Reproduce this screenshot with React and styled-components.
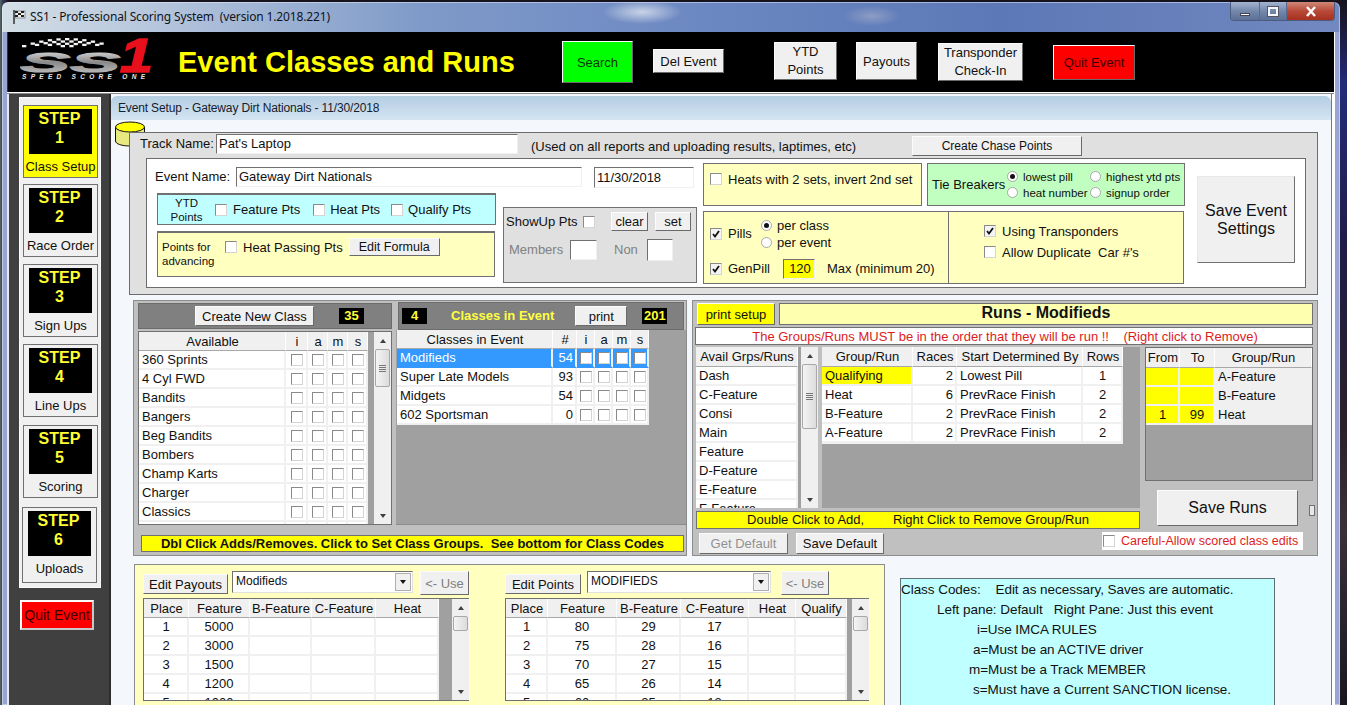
import React from 'react';
import styled, { createGlobalStyle } from 'styled-components';

const GlobalStyle = createGlobalStyle`
  html, body {
    margin: 0;
    padding: 0;
    width: 1347px;
    height: 705px;
    overflow: hidden;
    background: #1a1620;
  }
  * { box-sizing: border-box; }
  #root {
    font-family: "Liberation Sans", Arial, sans-serif;
    font-size: 13px;
    color: #111;
  }
`;

const Desktop = styled.div`
  width: 1347px;
  height: 705px;
  overflow: hidden;
  padding: 2px 0 0 2px;
  background:
    linear-gradient(90deg, #5a6a5c 0, #39426a 2px, #2a2430 6px, transparent 8px),
    linear-gradient(180deg, #17131c 0, #232c78 12%, #201c48 35%, #2b2028 60%, #3a3038 75%, #1a1620 100%);
`;
const Window = styled.div`
  width: 1338px;
  height: 703px;
  padding: 0 5px;
  border-radius: 6px 6px 0 0;
  background:
    linear-gradient(180deg, transparent 0, transparent 30px, #98a4d4 30px, #98a4d4 100%),
    radial-gradient(ellipse 40px 12px at 640px 10px, #c9d3e6 0, transparent 100%),
    radial-gradient(ellipse 28px 10px at 870px 14px, #8d9dc4 0, transparent 100%),
    linear-gradient(90deg, #d4dfe6 0, #b0c1da 180px, #7f9ac8 420px, #6c88c2 700px, #5c78b6 1000px, #7288c0 1338px);
  box-shadow: inset 0 0 0 1px rgba(230, 240, 255, 0.5);
`;
const TitleBar = styled.div`
  height: 30px;
  display: flex;
  align-items: flex-start;
  padding-left: 5px;
`;
const TitleText = styled.div`
  font-family: "Noto Sans", "Liberation Sans", sans-serif;
  font-size: 12px;
  line-height: 30px;
  margin-left: 4px;
  letter-spacing: -0.15px;
  white-space: pre;
  color: #10141c;
`;
const FlagIcon = styled.svg`
  margin-top: 7px;
`;
const WinButtons = styled.div`
  margin-left: auto;
  display: flex;
  height: 19px;
  border: 1px solid #4c5c80;
  border-top: none;
  border-radius: 0 0 4px 4px;
  overflow: hidden;
`;
const WinButton = styled.div`
  width: ${p => p.$w}px;
  display: flex;
  align-items: center;
  justify-content: center;
  background: ${p => p.$close
    ? 'linear-gradient(180deg, #d08878, #b84a38 50%, #a83020)'
    : 'linear-gradient(180deg, #a4b4d0, #7488ac 50%, #5c7098)'};
  border-left: ${p => p.$first ? 'none' : '1px solid #5a6a90'};
`;
const MinGlyph = styled.div`
  width: 10px;
  height: 3px;
  margin-top: 6px;
  background: #fff;
  border: 1px solid #445;
`;
const MaxGlyph = styled.div`
  width: 10px;
  height: 9px;
  background: transparent;
  border: 2px solid #f4f6fa;
  outline: 1px solid #556;
`;

const Client = styled.div`
  width: 1328px;
  height: 673px;
  overflow: hidden;
  background: #404040;
  border-right: 1px solid #fff;
`;
const Header = styled.div`
  height: 60px;
  background: #000;
  display: flex;
  align-items: center;
  border-left: 1px solid #333;
`;
const HeaderLine = styled.div`
  height: 2px;
  background: linear-gradient(180deg, #fff 50%, #888 50%);
`;
const LogoBox = styled.div`
  width: 160px;
  height: 60px;
  padding: 4px 0 0 12px;
  flex-shrink: 0;
`;
const PageTitle = styled.div`
  width: 384px;
  padding-left: 10px;
  font-size: 29px;
  font-weight: 700;
  color: #ffff00;
  white-space: nowrap;
`;
const Bevel = styled.div`
  display: flex;
  align-items: center;
  justify-content: center;
  text-align: center;
  flex-shrink: 0;
  width: ${p => p.$w}px;
  height: ${p => p.$h}px;
  margin-left: ${p => p.$ml || 0}px;
  margin-top: ${p => p.$mt || 0}px;
  background: ${p => p.$bg || '#f0f0f0'};
  color: ${p => p.$color || '#111'};
  font-size: ${p => p.$size || 13}px;
  line-height: ${p => p.$lh || 'normal'};
  border: 1px solid;
  border-color: #fcfcfc #6a6a6a #6a6a6a #fcfcfc;
  white-space: pre-line;
`;

const Body = styled.div`
  display: flex;
  height: 611px;
  background: #fff;
`;
const Sidebar = styled.div`
  width: 102px;
  flex-shrink: 0;
  padding: 3px 0 0 10px;
  background: #404040;
  border-left: 2px solid #e8e8e8;
`;
const StepPanel = styled.div`
  width: 82px;
  height: 491px;
  padding: 7px 0 0 3px;
  background: #f0f0f0;
  border: 1px solid #fafafa;
`;
const StepCard = styled.div`
  width: 75px;
  height: ${p => p.$h}px;
  margin-top: ${p => p.$mt}px;
  margin-left: ${p => p.$ml || 0}px;
  padding: 3px 0 0 5px;
  background: ${p => p.$active ? '#ffff00' : '#f0f0f0'};
  border: 1px solid #707070;
`;
const StepBlack = styled.div`
  width: 63px;
  height: 45px;
  background: #000;
  color: #ffff33;
  font-size: 16px;
  font-weight: 700;
  line-height: 19px;
  text-align: center;
  padding-right: 2px;
`;
const StepLabel = styled.div`
  font-size: 13px;
  line-height: 16px;
  margin: 5px 0 0 -5px;
  width: 73px;
  text-align: center;
  white-space: nowrap;
`;
const SideQuit = styled(Bevel)`
  font-size: 14px;
  color: #3a0000;
  border-color: #fcfcfc #c8c8c8 #c8c8c8 #fcfcfc;
  border-width: 2px;
`;

const Main = styled.div`
  position: relative;
  width: 1223px;
  background: #f4f8fc;
  border-left: 2px solid #2c2c2c;
  border-right: 1px solid #4a8a90;
`;
const TabHead = styled.div`
  height: 24px;
  margin-top: 2px;
  padding-left: 7px;
  font-size: 12px;
  letter-spacing: -0.15px;
  line-height: 24px;
  border-radius: 6px 6px 0 0;
  background: linear-gradient(180deg, #b4cee2, #d4e4f2);
  color: #15202c;
`;
const Cylinder = styled.svg`
  position: absolute;
  left: 3px;
  top: 27px;
`;
const TrackPanel = styled.div`
  position: relative;
  width: 1189px;
  height: 163px;
  margin: 12px 0 0 18px;
  background: #e0e0e0;
  border: 1px solid #6c6c6c;
`;
const TrackRow = styled.div`
  height: 25px;
  display: flex;
  align-items: flex-start;
  padding: 1px 0 0 10px;
`;
const Text = styled.div`
  width: ${p => p.$w ? `${p.$w}px` : 'auto'};
  margin-left: ${p => p.$ml || 0}px;
  margin-top: ${p => p.$mt || 0}px;
  font-size: ${p => p.$size || 13}px;
  font-weight: ${p => p.$bold ? 700 : 400};
  color: ${p => p.$color || 'inherit'};
  line-height: ${p => p.$lh || 20}px;
  text-align: ${p => p.$align || 'left'};
  white-space: pre-line;
  flex-shrink: 0;
`;
const Input = styled.div`
  width: ${p => p.$w}px;
  height: ${p => p.$h}px;
  margin-left: ${p => p.$ml || 0}px;
  padding-left: 2px;
  line-height: ${p => p.$h - 2}px;
  font-size: 13px;
  background: ${p => p.$bg || '#fff'};
  text-align: ${p => p.$align || 'left'};
  border: 1px solid;
  border-color: #707070 #f0f0f0 #f0f0f0 #707070;
  flex-shrink: 0;
`;
const WhitePanel = styled.div`
  display: flex;
  width: 1160px;
  height: 130px;
  margin-left: 16px;
  background: #fff;
  border: 1px solid #6c6c6c;
`;
const ColA = styled.div`
  width: 540px;
  margin-left: 10px;
`;
const ColB = styled.div`
  width: 482px;
  margin-left: 6px;
`;
const Row = styled.div`
  display: flex;
  align-items: ${p => p.$align || 'center'};
  height: ${p => p.$h ? `${p.$h}px` : 'auto'};
  margin-top: ${p => p.$mt || 0}px;
  margin-left: ${p => p.$ml || 0}px;
`;
const Tinted = styled.div`
  display: ${p => p.$flex ? 'flex' : 'block'};
  align-items: ${p => p.$align || 'center'};
  width: ${p => p.$w}px;
  height: ${p => p.$h}px;
  margin-top: ${p => p.$mt || 0}px;
  margin-left: ${p => p.$ml || 0}px;
  padding: ${p => p.$pad || 0};
  background: ${p => p.$bg};
  border: 1px solid #707070;
  border-top-width: ${p => p.$heavy ? 2 : 1}px;
  flex-shrink: 0;
`;
const Stack = styled.div`
  flex-shrink: 0;
`;
const Box = styled.span`
  display: inline-flex;
  align-items: center;
  justify-content: center;
  width: 12px;
  height: 12px;
  flex-shrink: 0;
  background: ${p => p.$bg || '#fff'};
  border: 1px solid;
  border-color: #8a8a8a #d4d4d4 #d4d4d4 #8a8a8a;
`;
const Radio = styled.span`
  display: inline-flex;
  align-items: center;
  justify-content: center;
  width: 11px;
  height: 11px;
  flex-shrink: 0;
  border-radius: 50%;
  background: #fff;
  border: 1px solid #a8a8a8;
  &::after {
    content: '';
    display: ${p => p.$on ? 'block' : 'none'};
    width: 5px;
    height: 5px;
    border-radius: 50%;
    background: #111;
  }
`;
const Opt = styled.div`
  display: flex;
  align-items: center;
  gap: ${p => p.$gap || 6}px;
  width: ${p => p.$w ? `${p.$w}px` : 'auto'};
  margin-left: ${p => p.$ml || 0}px;
  margin-top: ${p => p.$mt || 0}px;
  height: ${p => p.$h || 16}px;
  font-size: ${p => p.$size || 13}px;
  white-space: pre;
  flex-shrink: 0;
`;
const SaveEvent = styled(Bevel)`
  border-color: #e8e8e8 #707070 #707070 #e8e8e8;
`;

const MidRow = styled.div`
  display: flex;
  margin: 5px 0 0 22px;
`;
const ClassesPanel = styled.div`
  width: 554px;
  height: 256px;
  padding-top: 1px;
  background: #c0c0c0;
  border: 1px solid #8c8c8c;
`;
const ClassColumns = styled.div`
  display: flex;
  height: 223px;
`;
const LeftCol = styled.div`
  width: 254px;
  margin: 1px 0 0 4px;
`;
const RightCol = styled.div`
  width: 291px;
  margin-left: 4px;
  background: linear-gradient(180deg, #c0c0c0 28px, #a0a0a0 28px);
  border-bottom: 1px solid #8c8c8c;
`;
const GrayHead = styled.div`
  display: flex;
  align-items: center;
  height: ${p => p.$h}px;
  margin-left: ${p => p.$ml || 0}px;
  width: ${p => p.$w}px;
  background: #808080;
  border: 1px solid #6c6c6c;
`;
const Badge = styled.div`
  width: 25px;
  height: 16px;
  margin-left: ${p => p.$ml}px;
  background: #000;
  color: #ffff33;
  font-size: 13px;
  font-weight: 700;
  line-height: 16px;
  text-align: center;
  flex-shrink: 0;
`;
const GridWrap = styled.div`
  display: flex;
  width: ${p => p.$w}px;
  height: ${p => p.$h}px;
  margin-top: ${p => p.$mt || 0}px;
  background: #a0a0a0;
  border: ${p => p.$flat ? 'none' : '1px solid #707070'};
  flex-shrink: 0;
`;
const GridBody = styled.div`
  width: ${p => p.$w}px;
  height: ${p => p.$h ? `${p.$h}px` : '100%'};
  margin-left: ${p => p.$ml || 0}px;
  overflow: hidden;
  flex-shrink: 0;
  background: #f0f0f0;
`;
const GridRow = styled.div`
  display: grid;
  grid-template-columns: ${p => p.$cols};
  height: ${p => p.$h || 19}px;
  background: ${p => p.$selected ? '#3399ff' : 'transparent'};
  color: ${p => p.$selected ? '#fff' : 'inherit'};
`;
const Cell = styled.div`
  display: flex;
  align-items: center;
  justify-content: ${p => p.$align === 'center' ? 'center' : p.$align === 'right' ? 'flex-end' : 'flex-start'};
  padding: 0 2px 0 3px;
  height: ${p => p.$h || 19}px;
  font-size: 13px;
  white-space: nowrap;
  overflow: hidden;
  background: ${p => p.$head ? '#f0f0f0' : p.$bg || (p.$selected ? '#3399ff' : '#fff')};
  border-right: 2px solid #f0f0f0;
  border-bottom: 2px solid ${p => p.$selected ? '#3399ff' : '#f0f0f0'};
  ${p => p.$head && 'border-bottom: 1px solid #a8a8a8; border-right: 1px solid #fff;'}
`;
const ScrollTrack = styled.div`
  display: flex;
  flex-direction: column;
  width: 17px;
  margin-left: ${p => p.$ml || 0}px;
  background: #f0f0f0;
  flex-shrink: 0;
`;
const Arrow = styled.div`
  height: 17px;
  display: flex;
  align-items: center;
  justify-content: center;
  flex-shrink: 0;
  &::after {
    content: '';
    border-left: 3px solid transparent;
    border-right: 3px solid transparent;
    border-${p => p.$down ? 'top' : 'bottom'}: 4px solid #404040;
  }
`;
const Thumb = styled.div`
  height: ${p => p.$h}px;
  margin: 0 1px;
  border: 1px solid #a8a8a8;
  border-radius: 2px;
  background: linear-gradient(90deg, #f4f4f4, #dcdcdc);
  display: flex;
  align-items: center;
  justify-content: center;
  flex-shrink: 0;
`;
const Grip = styled.div`
  width: 7px;
  height: 7px;
  background: repeating-linear-gradient(180deg, #777 0 1px, transparent 1px 2px);
`;
const Spacer = styled.div`
  flex: 1;
`;
const BarYellow = styled.div`
  width: ${p => p.$w}px;
  height: ${p => p.$h}px;
  margin: ${p => p.$margin};
  background: #ffff00;
  border: 1px solid #707070;
  font-size: ${p => p.$size}px;
  font-weight: ${p => p.$bold ? 700 : 400};
  line-height: ${p => p.$h - 2}px;
  white-space: pre;
  text-align: center;
`;
const GreyFill = styled.div`
  width: ${p => p.$w}px;
  flex-shrink: 0;
  background: ${p => p.$bg};
`;

const RunsPanel = styled.div`
  width: 626px;
  height: 256px;
  margin-left: 5px;
  padding: 2px 0 0 2px;
  background: #c0c0c0;
  border: 1px solid #8c8c8c;
`;
const RunsTitle = styled.div`
  width: 534px;
  height: 22px;
  margin-left: 4px;
  background: #ffffb0;
  border: 1px solid #707070;
  font-size: 16px;
  font-weight: 700;
  line-height: 18px;
  text-align: center;
`;
const RedLine = styled.div`
  width: 618px;
  height: 18px;
  margin-top: 2px;
  background: #fff;
  border: 1px solid #707070;
  color: #dd1c1c;
  font-size: 13px;
  line-height: 17px;
  text-align: center;
  padding-left: 2px;
  white-space: pre;
`;
const RunsBody = styled.div`
  display: flex;
  margin: 2px 0 0 1px;
  height: 182px;
`;
const RunsLeft = styled.div`
  width: 444px;
  flex-shrink: 0;
`;
const RunsRight = styled.div`
  width: 168px;
  margin-left: 5px;
  flex-shrink: 0;
`;
const RunsFoot = styled.div`
  display: flex;
  align-items: flex-start;
  margin: 3px 0 0 4px;
`;
const Careful = styled.div`
  display: flex;
  align-items: center;
  gap: 6px;
  width: 201px;
  height: 18px;
  margin-left: 218px;
  padding-left: 1px;
  background: #fff;
  color: #dd1c1c;
  font-size: 12.5px;
  white-space: nowrap;
`;
const TinyTab = styled.div`
  width: 6px;
  height: 11px;
  margin: 24px 0 0 11px;
  background: #e8e8e8;
  border: 1px solid #707070;
  flex-shrink: 0;
`;

const BottomRow = styled.div`
  display: flex;
  margin: 8px 0 0 23px;
`;
const YellowPanel = styled.div`
  display: flex;
  width: 751px;
  height: 160px;
  padding: 6px 0 0 8px;
  background: #ffffc0;
  border: 1px solid #8c8c8c;
  flex-shrink: 0;
`;
const PayBlock = styled.div`
  width: ${p => p.$w}px;
  margin-left: ${p => p.$ml || 0}px;
  flex-shrink: 0;
`;
const PayTop = styled.div`
  display: flex;
  align-items: flex-start;
  height: 27px;
`;
const Select = styled.div`
  display: flex;
  justify-content: space-between;
  width: ${p => p.$w}px;
  height: 22px;
  margin-left: ${p => p.$ml}px;
  padding: 1px 1px 1px 3px;
  background: #fff;
  font-size: 12px;
  line-height: 17px;
  border: 1px solid;
  border-color: #707070 #e0e0e0 #e0e0e0 #707070;
  flex-shrink: 0;
`;
const SelectArrow = styled.div`
  width: 16px;
  height: 18px;
  background: #f0f0f0;
  border: 1px solid #b0b0b0;
  display: flex;
  align-items: center;
  justify-content: center;
  &::after {
    content: '';
    border-left: 3px solid transparent;
    border-right: 3px solid transparent;
    border-top: 4px solid #111;
  }
`;
const CodesBox = styled.div`
  width: 375px;
  height: 146px;
  margin: 14px 0 0 15px;
  padding-top: 1px;
  background: #c0ffff;
  border: 1px solid #607070;
  flex-shrink: 0;
`;
const CodeLine = styled.div`
  height: 20px;
  padding-left: ${p => p.$indent}px;
  font-size: 13.5px;
  letter-spacing: -0.05px;
  line-height: 20px;
  white-space: pre;
`;

const CheckMark = () => (
  <svg width="8" height="8" viewBox="0 0 8 8">
    <path d="M1 4 L3 6.5 L7 1" fill="none" stroke="#111" strokeWidth="1.8" />
  </svg>
);

const Check = ({ on, bg }) => (
  <Box $bg={bg}>{on && <CheckMark />}</Box>
);

// checkered flag squares over the logo, highest in the middle
const flagSquares = [];
for (let i = 0; i < 20; i++) {
  const rows = 1 + Math.round((1 - Math.abs(i - 10) / 10) * 3);
  for (let j = 0; j < rows; j++) {
    if ((i + j) % 2 === 0) {
      const dip = 7 * Math.pow((i - 10) / 10, 2);
      flagSquares.push({ x: 2 + i * 4.3, y: 2 + dip + j * 2.3 });
    }
  }
}

const Logo = () => (
  <svg width="136" height="46" viewBox="0 0 136 46">
    <defs>
      <linearGradient id="silver" x1="0" y1="0" x2="0" y2="1">
        <stop offset="0" stopColor="#f0f0f0" />
        <stop offset="0.5" stopColor="#8a8a8a" />
        <stop offset="1" stopColor="#d0d0d0" />
      </linearGradient>
    </defs>
    <g fill="#f4f4f4">
      {flagSquares.map(s => (
        <rect key={`${s.x}-${s.y}`} x={s.x} y={s.y} width="4.3" height="2.3" />
      ))}
    </g>
    <text x="0" y="36" fontFamily="Liberation Sans" fontWeight="700" fontStyle="italic" fontSize="28" fill="url(#silver)" stroke="url(#silver)" strokeWidth="1" textLength="100" lengthAdjust="spacingAndGlyphs">SS</text>
    <text x="100" y="36" fontFamily="Liberation Sans" fontWeight="700" fontStyle="italic" fontSize="49" fill="#e8101c" stroke="#e8101c" strokeWidth="1.6" textLength="33" lengthAdjust="spacingAndGlyphs">1</text>
    <text x="2" y="43" fontFamily="Liberation Sans" fontWeight="700" fontStyle="italic" fontSize="6.5" fill="#e8e8e8" textLength="123">SPEED SCORE ONE</text>
  </svg>
);

const steps = [
  { n: 1, label: 'Class Setup', active: true, mt: 0, h: 73 },
  { n: 2, label: 'Race Order', mt: 6, h: 73 },
  { n: 3, label: 'Sign Ups', mt: 7, h: 73 },
  { n: 4, label: 'Line Ups', mt: 7, h: 73 },
  { n: 5, label: 'Scoring', mt: 8, h: 73 },
  { n: 6, label: 'Uploads', mt: 9, h: 76, ml: -1 },
];

const available = ['360 Sprints', '4 Cyl FWD', 'Bandits', 'Bangers', 'Beg Bandits', 'Bombers', 'Champ Karts', 'Charger', 'Classics', ''];
const inEvent = [
  ['Modifieds', 54],
  ['Super Late Models', 93],
  ['Midgets', 54],
  ['602 Sportsman', 0],
];
const availRuns = ['Dash', 'C-Feature', 'Consi', 'Main', 'Feature', 'D-Feature', 'E-Feature', 'F-Feature', ''];
const runs = [
  ['Qualifying', 2, 'Lowest Pill', 1],
  ['Heat', 6, 'PrevRace Finish', 2],
  ['B-Feature', 2, 'PrevRace Finish', 2],
  ['A-Feature', 2, 'PrevRace Finish', 2],
];
const fromTo = [
  ['', '', 'A-Feature'],
  ['', '', 'B-Feature'],
  ['1', '99', 'Heat'],
];
const payouts = [
  [1, 5000], [2, 3000], [3, 1500], [4, 1200], [5, 1000],
];
const points = [
  [1, 80, 29, 17], [2, 75, 28, 16], [3, 70, 27, 15], [4, 65, 26, 14], [5, 60, 25, 13],
];

const availCols = '147px 22px 20px 20px 20px';
const eventCols = '156px 24px 18px 18px 18px 18px';
const runsCols = '91px 44px 126px 40px';
const fromCols = '34px 35px 97px';
const payCols = '45px 61px 62px 64px 63px';
const pointCols = '42px 69px 64px 68px 47px 51px';

const Head = ({ cols, labels, h }) => (
  <GridRow $cols={cols} $h={h}>
    {labels.map(l => <Cell key={l} $head $h={h} $align="center">{l}</Cell>)}
  </GridRow>
);

const ScrollBar = ({ thumb, grip, ml }) => (
  <ScrollTrack $ml={ml}>
    <Arrow />
    <Thumb $h={thumb}>{grip && <Grip />}</Thumb>
    <Spacer />
    <Arrow $down />
  </ScrollTrack>
);

export default function App() {
  return (
    <Desktop>
      <GlobalStyle />
      <Window>
        <TitleBar>
          <FlagIcon width="14" height="16" viewBox="0 0 14 16">
            <path d="M2 1 V15" stroke="#333" strokeWidth="1.5" />
            <rect x="3" y="2" width="10" height="7" fill="#eee" stroke="#444" strokeWidth="0.5" />
            <path d="M3 2h3v2H3zM9 2h3v2H9zM6 4h3v2H6zM3 6h3v2H3zM9 6h3v2H9z" fill="#222" />
          </FlagIcon>
          <TitleText>SS1 - Professional Scoring System  (version 1.2018.221)</TitleText>
          <WinButtons>
            <WinButton $w={28} $first><MinGlyph /></WinButton>
            <WinButton $w={27}><MaxGlyph /></WinButton>
            <WinButton $w={48} $close>
              <svg width="12" height="11" viewBox="0 0 12 11">
                <path d="M2 1 L10 10 M10 1 L2 10" stroke="#fff" strokeWidth="2.4" />
              </svg>
            </WinButton>
          </WinButtons>
        </TitleBar>
        <Client>
          <Header>
            <LogoBox><Logo /></LogoBox>
            <PageTitle>Event Classes and Runs</PageTitle>
            <Bevel $w={71} $h={42} $ml={10} $bg="#00ff00" $color="#063a06">Search</Bevel>
            <Bevel $w={71} $h={24} $ml={20} $mt={-2}>Del Event</Bevel>
            <Bevel $w={63} $h={38} $ml={50} $mt={-2} $lh="18px">{'YTD\nPoints'}</Bevel>
            <Bevel $w={61} $h={38} $ml={19} $mt={-2}>Payouts</Bevel>
            <Bevel $w={85} $h={38} $ml={21} $lh="18px">{'Transponder\nCheck-In'}</Bevel>
            <Bevel $w={82} $h={35} $ml={30} $mt={1} $bg="#ff0000" $color="#3a0000">Quit Event</Bevel>
          </Header>
          <HeaderLine />
          <Body>
            <Sidebar>
              <StepPanel>
                {steps.map(s => (
                  <StepCard key={s.n} $active={s.active} $mt={s.mt} $h={s.h} $ml={s.ml}>
                    <StepBlack>STEP<br />{s.n}</StepBlack>
                    <StepLabel>{s.label}</StepLabel>
                  </StepCard>
                ))}
              </StepPanel>
              <SideQuit $w={74} $h={30} $ml={1} $mt={12} $bg="#ff0000">Quit Event</SideQuit>
            </Sidebar>
            <Main>
              <TabHead>Event Setup - Gateway Dirt Nationals - 11/30/2018</TabHead>
              <Cylinder width="32" height="26" viewBox="0 0 32 26">
                <path d="M1.5 6 V20 C1.5 23 8 25 16 25 C24 25 30.5 23 30.5 20 V6" fill="#e8e880" stroke="#111" />
                <ellipse cx="16" cy="6" rx="14.5" ry="5" fill="#ffff00" stroke="#111" />
              </Cylinder>
              <TrackPanel>
                <TrackRow>
                  <Text $w={76}>Track Name:</Text>
                  <Input $w={302} $h={20}>Pat's Laptop</Input>
                  <Text $ml={13} $w={381} $mt={3}>(Used on all reports and uploading results, laptimes, etc)</Text>
                  <Bevel $w={170} $h={20} $mt={2} $size={12}>Create Chase Points</Bevel>
                </TrackRow>
                <WhitePanel>
                  <ColA>
                    <Row $mt={8} $h={26} $align="flex-start">
                      <Text $ml={-2} $w={81}>Event Name:</Text>
                      <Input $w={346} $h={20}>Gateway Dirt Nationals</Input>
                      <Input $w={100} $h={21} $ml={12}>11/30/2018</Input>
                    </Row>
                    <Row $align="flex-start">
                      <Stack>
                        <Tinted $flex $w={339} $h={32} $bg="#c0ffff" $heavy>
                          <Text $w={57} $size={11.5} $lh={14} $align="center">{'YTD\nPoints'}</Text>
                          <Opt><Check /><span>Feature Pts</span></Opt>
                          <Opt $ml={13} $gap={5}><Check /><span>Heat Pts</span></Opt>
                          <Opt $ml={11} $gap={5}><Check /><span>Qualify Pts</span></Opt>
                        </Tinted>
                        <Tinted $flex $align="flex-start" $w={338} $h={46} $mt={6} $bg="#ffffc0" $pad="5px 0 0 0" $heavy>
                          <Text $ml={4} $mt={2} $w={63} $size={11.5} $lh={14}>{'Points for\nadvancing'}</Text>
                          <Opt $mt={1}><Check /><span>Heat Passing Pts</span></Opt>
                          <Bevel $w={91} $h={18} $ml={6} $size={12.5}>Edit Formula</Bevel>
                        </Tinted>
                      </Stack>
                      <Tinted $w={194} $h={76} $ml={7} $mt={14} $bg="#e0e0e0" $pad="4px 0 0 2px">
                        <Row $h={19}>
                          <Text $w={77}>ShowUp Pts</Text>
                          <Check />
                          <Bevel $w={37} $h={19} $ml={16}>clear</Bevel>
                          <Bevel $w={36} $h={19} $ml={7}>set</Bevel>
                        </Row>
                        <Row $mt={8} $ml={3}>
                          <Text $w={61} $color="#808080">Members</Text>
                          <Input $w={27} $h={20} />
                          <Text $ml={17} $w={33} $color="#808080">Non</Text>
                          <Input $w={26} $h={22} />
                        </Row>
                      </Tinted>
                    </Row>
                  </ColA>
                  <ColB>
                    <Row $mt={4} $align="flex-start">
                      <Tinted $w={219} $h={43} $bg="#ffffc0" $pad="7px 0 0 6px">
                        <Opt><Check /><span>Heats with 2 sets, invert 2nd set</span></Opt>
                      </Tinted>
                      <Tinted $flex $w={258} $h={43} $ml={5} $bg="#c0ffc0" $pad="0 0 0 4px">
                        <Text $w={75} $mt={1}>Tie Breakers</Text>
                        <Stack>
                          <Row>
                            <Opt $w={83} $gap={5} $size={11.5}><Radio $on /><span>lowest pill</span></Opt>
                            <Opt $gap={5} $size={11.5}><Radio /><span>highest ytd pts</span></Opt>
                          </Row>
                          <Row>
                            <Opt $w={83} $gap={5} $size={11.5}><Radio /><span>heat number</span></Opt>
                            <Opt $gap={5} $size={11.5}><Radio /><span>signup order</span></Opt>
                          </Row>
                        </Stack>
                      </Tinted>
                    </Row>
                    <Row $mt={5} $align="stretch">
                      <Tinted $w={246} $h={73} $bg="#ffffc0" $pad="5px 0 0 6px">
                        <Row>
                          <Check on bg="#f4f4f4" />
                          <Text $ml={6} $w={33}>Pills</Text>
                          <Stack>
                            <Opt $h={17} $gap={5}><Radio $on /><span>per class</span></Opt>
                            <Opt $h={17} $gap={5}><Radio /><span>per event</span></Opt>
                          </Stack>
                        </Row>
                        <Row $mt={8}>
                          <Check on bg="#f4f4f4" />
                          <Text $ml={6} $w={55}>GenPill</Text>
                          <Input $w={32} $h={20} $bg="#ffff00" $align="center">120</Input>
                          <Text $ml={12}>Max (minimum 20)</Text>
                        </Row>
                      </Tinted>
                      <Tinted $w={236} $h={73} $ml={-1} $bg="#ffffc0" $pad="11px 0 0 35px">
                        <Opt><Check on bg="#f4f4f4" /><span>Using Transponders</span></Opt>
                        <Opt $mt={5}><Check /><span>Allow Duplicate  Car #'s</span></Opt>
                      </Tinted>
                    </Row>
                  </ColB>
                  <SaveEvent $w={98} $h={87} $ml={12} $mt={17} $size={16} $lh="18px">{'Save Event\nSettings'}</SaveEvent>
                </WhitePanel>
              </TrackPanel>

              <MidRow>
                <ClassesPanel>
                  <ClassColumns>
                    <LeftCol>
                      <GrayHead $h={26} $w={254}>
                        <Bevel $w={119} $h={20} $ml={56}>Create New Class</Bevel>
                        <Badge $ml={25}>35</Badge>
                      </GrayHead>
                      <GridWrap $w={254} $h={194} $mt={2}>
                        <GridBody $w={229}>
                          <Head cols={availCols} labels={['Available', 'i', 'a', 'm', 's']} />
                          {available.map((name, i) => (
                            <GridRow key={i} $cols={availCols}>
                              <Cell>{name}</Cell>
                              {[0, 1, 2, 3].map(k => <Cell key={k} $align="center"><Check /></Cell>)}
                            </GridRow>
                          ))}
                        </GridBody>
                        <ScrollBar thumb={38} grip ml={6} />
                      </GridWrap>
                    </LeftCol>
                    <RightCol>
                      <GrayHead $h={28} $w={286} $ml={2}>
                        <Badge $ml={3}>4</Badge>
                        <Text $ml={24} $bold $color="#ffff40" $size={13}>Classes in Event</Text>
                        <Bevel $w={52} $h={20} $ml={21}>print</Bevel>
                        <Badge $ml={15}>201</Badge>
                      </GrayHead>
                      <GridBody $w={252} $h={95} $ml={1}>
                        <Head cols={eventCols} labels={['Classes in Event', '#', 'i', 'a', 'm', 's']} />
                        {inEvent.map(([name, count], i) => (
                          <GridRow key={name} $cols={eventCols} $selected={i === 0}>
                            <Cell $selected={i === 0}>{name}</Cell>
                            <Cell $selected={i === 0} $align="right">{count}</Cell>
                            {[0, 1, 2, 3].map(k => (
                              <Cell key={k} $selected={i === 0} $align="center"><Check /></Cell>
                            ))}
                          </GridRow>
                        ))}
                      </GridBody>
                    </RightCol>
                  </ClassColumns>
                  <BarYellow $w={543} $h={17} $margin="10px 0 0 7px" $size={13} $bold>
                    Dbl Click Adds/Removes. Click to Set Class Groups.  See bottom for Class Codes
                  </BarYellow>
                </ClassesPanel>

                <RunsPanel>
                  <Row $ml={2}>
                    <Bevel $w={78} $h={22} $bg="#ffff00">print setup</Bevel>
                    <RunsTitle>Runs - Modifieds</RunsTitle>
                  </Row>
                  <RedLine>The Groups/Runs MUST be in the order that they will be run !!    (Right click to Remove)</RedLine>
                  <RunsBody>
                    <RunsLeft>
                      <Row $align="stretch" $h={161}>
                        <GridBody $w={102}>
                          <Head cols="102px" h={20} labels={['Avail Grps/Runs']} />
                          {availRuns.map((name, i) => (
                            <GridRow key={i} $cols="102px"><Cell>{name}</Cell></GridRow>
                          ))}
                        </GridBody>
                        <GreyFill $w={3} $bg="#a0a0a0" />
                        <ScrollBar thumb={65} grip />
                        <GreyFill $w={4} $bg="#c0c0c0" />
                        <GridWrap $w={318} $h={161} $flat>
                          <GridBody $w={301} $h={97}>
                            <Head cols={runsCols} h={20} labels={['Group/Run', 'Races', 'Start Determined By', 'Rows']} />
                            {runs.map(([group, races, start, rows], i) => (
                              <GridRow key={group} $cols={runsCols}>
                                <Cell $bg={i === 0 ? '#ffff00' : undefined}>{group}</Cell>
                                <Cell $align="right">{races}</Cell>
                                <Cell>{start}</Cell>
                                <Cell $align="center">{rows}</Cell>
                              </GridRow>
                            ))}
                          </GridBody>
                        </GridWrap>
                      </Row>
                      <BarYellow $w={444} $h={18} $margin="3px 0 0 0" $size={13}>
                        {'Double Click to Add,        Right Click to Remove Group/Run'}
                      </BarYellow>
                    </RunsLeft>
                    <RunsRight>
                      <GridWrap $w={168} $h={134}>
                        <GridBody $w={166} $h={77}>
                          <Head cols={fromCols} h={20} labels={['From', 'To', 'Group/Run']} />
                          {fromTo.map(([from, to, group]) => (
                            <GridRow key={group} $cols={fromCols}>
                              <Cell $bg="#ffff00" $align="center">{from}</Cell>
                              <Cell $bg="#ffff00" $align="center">{to}</Cell>
                              <Cell $bg="#f0f0f0">{group}</Cell>
                            </GridRow>
                          ))}
                        </GridBody>
                      </GridWrap>
                      <Row $align="flex-start">
                        <Bevel $w={141} $h={36} $ml={12} $mt={9} $size={16}>Save Runs</Bevel>
                        <TinyTab />
                      </Row>
                    </RunsRight>
                  </RunsBody>
                  <RunsFoot>
                    <Bevel $w={89} $h={21} $mt={1} $color="#909090">Get Default</Bevel>
                    <Bevel $w={88} $h={21} $mt={1} $ml={8}>Save Default</Bevel>
                    <Careful><Check />Careful-Allow scored class edits</Careful>
                  </RunsFoot>
                </RunsPanel>
              </MidRow>

              <BottomRow>
                <YellowPanel>
                  <PayBlock $w={326}>
                    <PayTop>
                      <Bevel $w={85} $h={20} $mt={3}>Edit Payouts</Bevel>
                      <Select $w={181} $ml={4}>Modifieds<SelectArrow /></Select>
                      <Bevel $w={49} $h={24} $ml={7} $color="#808080">{'<- Use'}</Bevel>
                    </PayTop>
                    <GridWrap $w={326} $h={103}>
                      <GridBody $w={295}>
                        <Head cols={payCols} labels={['Place', 'Feature', 'B-Feature', 'C-Feature', 'Heat']} />
                        {payouts.map(([place, value]) => (
                          <GridRow key={place} $cols={payCols}>
                            <Cell $align="center">{place}</Cell>
                            <Cell $align="center">{value}</Cell>
                            <Cell /><Cell /><Cell />
                          </GridRow>
                        ))}
                      </GridBody>
                      <ScrollBar thumb={15} ml={13} />
                    </GridWrap>
                  </PayBlock>
                  <PayBlock $w={364} $ml={36}>
                    <PayTop>
                      <Bevel $w={76} $h={20} $mt={3}>Edit Points</Bevel>
                      <Select $w={184} $ml={6}>MODIFIEDS<SelectArrow /></Select>
                      <Bevel $w={48} $h={24} $ml={10} $color="#808080">{'<- Use'}</Bevel>
                    </PayTop>
                    <GridWrap $w={364} $h={103}>
                      <GridBody $w={341}>
                        <Head cols={pointCols} labels={['Place', 'Feature', 'B-Feature', 'C-Feature', 'Heat', 'Qualify']} />
                        {points.map(([place, a, b, c]) => (
                          <GridRow key={place} $cols={pointCols}>
                            <Cell $align="center">{place}</Cell>
                            <Cell $align="center">{a}</Cell>
                            <Cell $align="center">{b}</Cell>
                            <Cell $align="center">{c}</Cell>
                            <Cell /><Cell />
                          </GridRow>
                        ))}
                      </GridBody>
                      <ScrollBar thumb={15} ml={5} />
                    </GridWrap>
                  </PayBlock>
                </YellowPanel>
                <CodesBox>
                  <CodeLine $indent={0}>Class Codes:    Edit as necessary, Saves are automatic.</CodeLine>
                  <CodeLine $indent={36}>Left pane: Default   Right Pane: Just this event</CodeLine>
                  <CodeLine $indent={76}>i=Use IMCA RULES</CodeLine>
                  <CodeLine $indent={72}>a=Must be an ACTIVE driver</CodeLine>
                  <CodeLine $indent={68}>m=Must be a Track MEMBER</CodeLine>
                  <CodeLine $indent={72}>s=Must have a Current SANCTION license.</CodeLine>
                </CodesBox>
              </BottomRow>
            </Main>
          </Body>
        </Client>
      </Window>
    </Desktop>
  );
}
